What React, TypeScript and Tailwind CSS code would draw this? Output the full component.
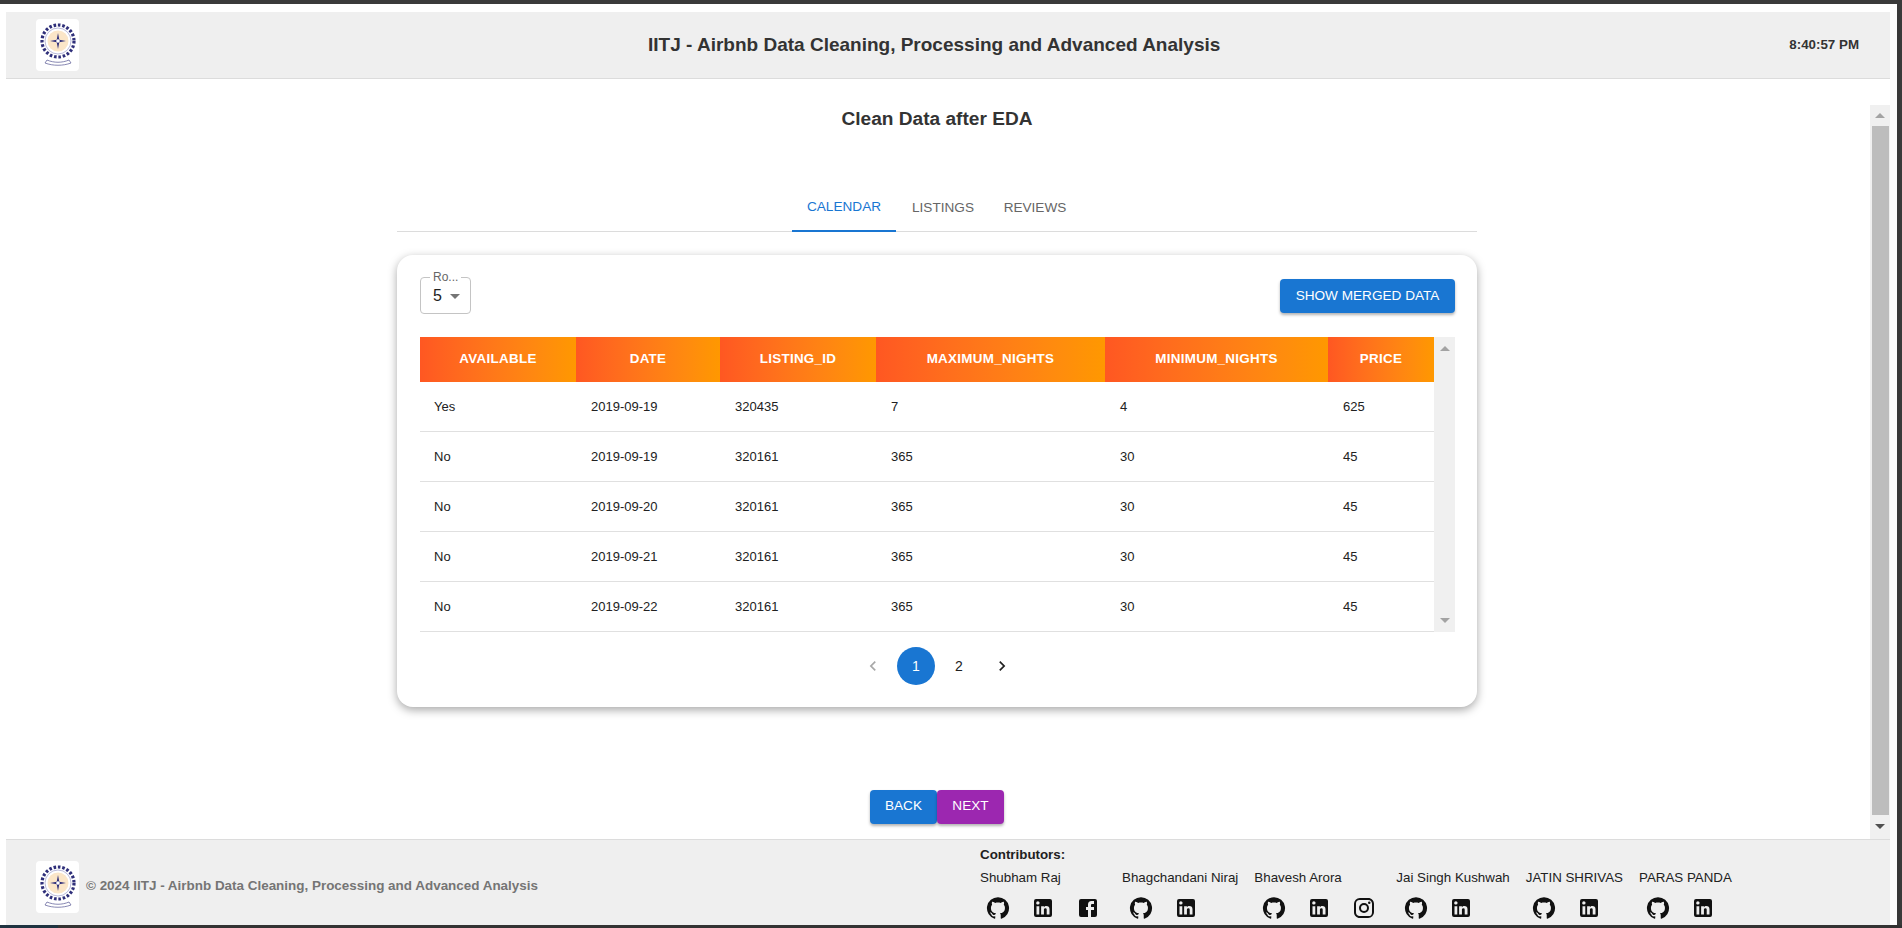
import React from 'react';

const GITHUB = 'M12 1.27a11 11 0 00-3.48 21.46c.55.09.73-.28.73-.55v-1.84c-3.03.64-3.67-1.46-3.67-1.46-.55-1.29-1.28-1.65-1.28-1.65-.92-.65.1-.65.1-.65 1.1 0 1.73 1.1 1.73 1.1.92 1.65 2.57 1.2 3.21.92a2 2 0 01.64-1.47c-2.47-.27-5.04-1.19-5.04-5.5 0-1.1.46-2.1 1.2-2.84a3.76 3.76 0 010-2.93s.91-.18 3.02 1.1c1.82-.51 3.76-.51 5.58 0 2.1-1.28 3.02-1.1 3.02-1.1a3.76 3.76 0 010 2.93 4.01 4.01 0 011.2 2.84c0 4.31-2.58 5.23-5.04 5.5.45.37.82.92.82 2.02v3.03c0 .27.1.64.73.55A11 11 0 0012 1.27';
const LINKEDIN = 'M19 3a2 2 0 0 1 2 2v14a2 2 0 0 1-2 2H5a2 2 0 0 1-2-2V5a2 2 0 0 1 2-2h14m-.5 15.5v-5.3a3.26 3.26 0 0 0-3.26-3.26c-.85 0-1.84.52-2.32 1.3v-1.11h-2.79v8.37h2.79v-4.93c0-.77.62-1.4 1.39-1.4a1.4 1.4 0 0 1 1.4 1.4v4.93h2.79M6.88 8.56a1.68 1.68 0 0 0 1.68-1.68c0-.93-.75-1.69-1.68-1.69a1.69 1.69 0 0 0-1.69 1.69c0 .93.76 1.68 1.69 1.68m1.39 9.94v-8.37H5.5v8.37h2.77z';
const FACEBOOK = 'M5 3h14a2 2 0 0 1 2 2v14a2 2 0 0 1-2 2H5a2 2 0 0 1-2-2V5a2 2 0 0 1 2-2m13 2h-2.5A3.5 3.5 0 0 0 12 8.5V11h-2v3h2v7h3v-7h3v-3h-3V9a1 1 0 0 1 1-1h2V5z';
const INSTAGRAM = 'M7.8 2h8.4C19.4 2 22 4.6 22 7.8v8.4a5.8 5.8 0 0 1-5.8 5.8H7.8C4.6 22 2 19.4 2 16.2V7.8A5.8 5.8 0 0 1 7.8 2m-.2 2A3.6 3.6 0 0 0 4 7.6v8.8C4 18.39 5.61 20 7.6 20h8.8a3.6 3.6 0 0 0 3.6-3.6V7.6C20 5.61 18.39 4 16.4 4H7.6m9.65 1.5a1.25 1.25 0 0 1 1.25 1.25A1.25 1.25 0 0 1 17.25 8 1.25 1.25 0 0 1 16 6.75a1.25 1.25 0 0 1 1.25-1.25M12 7a5 5 0 0 1 5 5 5 5 0 0 1-5 5 5 5 0 0 1-5-5 5 5 0 0 1 5-5m0 2a3 3 0 0 0-3 3 3 3 0 0 0 3 3 3 3 0 0 0 3-3 3 3 0 0 0-3-3z';

const contributors = [
  { name: 'Shubham Raj', inset: 'pl-[6px] pr-[6px]', icons: [GITHUB, LINKEDIN, FACEBOOK] },
  { name: 'Bhagchandani Niraj', inset: 'pl-[7px] pr-[5px]', icons: [GITHUB, LINKEDIN] },
  { name: 'Bhavesh Arora', inset: 'pl-2 pr-1', icons: [GITHUB, LINKEDIN, INSTAGRAM] },
  { name: 'Jai Singh Kushwah', inset: 'pl-2 pr-1', icons: [GITHUB, LINKEDIN] },
  { name: 'JATIN SHRIVAS', inset: 'pl-[6px] pr-[6px]', icons: [GITHUB, LINKEDIN] },
  { name: 'PARAS PANDA', inset: 'pl-[7px] pr-[5px]', icons: [GITHUB, LINKEDIN] },
];

const columns = [
  { label: 'AVAILABLE', width: 'w-[156px]', pad: 'pl-[14px]' },
  { label: 'DATE', width: 'w-[144px]', pad: 'pl-[15px]' },
  { label: 'LISTING_ID', width: 'w-[156px]', pad: 'pl-[15px]' },
  { label: 'MAXIMUM_NIGHTS', width: 'w-[229px]', pad: 'pl-[15px]' },
  { label: 'MINIMUM_NIGHTS', width: 'w-[223px]', pad: 'pl-[15px]' },
  { label: 'PRICE', width: 'w-[106px]', pad: 'pl-[15px]' },
];

const rows = [
  ['Yes', '2019-09-19', '320435', '7', '4', '625'],
  ['No', '2019-09-19', '320161', '365', '30', '45'],
  ['No', '2019-09-20', '320161', '365', '30', '45'],
  ['No', '2019-09-21', '320161', '365', '30', '45'],
  ['No', '2019-09-22', '320161', '365', '30', '45'],
];

const Logo: React.FC = () => (
  <div className="flex h-[52px] w-[43px] items-center justify-center rounded bg-white">
    <svg width="38" height="44" viewBox="0 0 38 44">
      <circle cx="19" cy="18" r="16" fill="none" stroke="#2f2f7a" strokeWidth="3.2" strokeDasharray="2.6 1.8" />
      <circle cx="19" cy="18" r="13" fill="none" stroke="#a8a8d0" strokeWidth="0.8" />
      <circle cx="19" cy="18" r="10.5" fill="#fbe6c8" />
      <path d="M19 10l1.3 6.7L27 18l-6.7 1.3L19 26l-1.3-6.7L11 18l6.7-1.3z" fill="#2f2f7a" />
      <circle cx="19" cy="18" r="1.8" fill="#fff" />
      <path d="M8 37c7 3 15 3 22 0l2 3c-8 3-18 3-26 0z" fill="none" stroke="#6a6aa0" strokeWidth="0.8" />
    </svg>
  </div>
);

const Icon: React.FC<{ d: string }> = ({ d }) => (
  <svg width="24" height="24" viewBox="0 0 24 24" fill="#111">
    <path d={d} />
  </svg>
);

const App: React.FC = () => {
  return (
    <div className="flex h-[928px] w-full flex-col overflow-hidden bg-white font-['Liberation_Sans',sans-serif] text-[#212121]">
      <div className="h-1 shrink-0 bg-[#3a3a3a]" />
      <div className="flex min-h-0 flex-1">
        <div className="flex min-w-0 flex-1 flex-col pl-[6px] pr-[7px] pt-2">
          <header className="flex h-[67px] shrink-0 items-center justify-between border-b border-[#dcdcdc] bg-[#efefef] pl-[30px] pr-[31px]">
            <Logo />
            <h1 className="text-[19px] font-bold text-[#333]">IITJ - Airbnb Data Cleaning, Processing and Advanced Analysis</h1>
            <span className="text-[13.33px] font-bold text-[#333]">8:40:57 PM</span>
          </header>

          <div className="flex min-h-0 flex-1">
            <main className="flex min-w-0 flex-1 flex-col items-center pr-[2px]">
              <h2 className="mt-[29px] text-[19.1px] font-bold leading-[22px] text-[#333]">Clean Data after EDA</h2>

              <nav className="mt-[52px] flex h-[50px] w-[1080px] justify-center border-b border-[#dcdcdc] pr-[2px] text-[13.6px] text-[#666]">
                <span className="flex h-[50px] w-[104px] items-center justify-center border-b-2 border-[#1976d2] pt-[2px] text-[#1976d2]">CALENDAR</span>
                <span className="flex h-[49px] w-[94px] items-center justify-center pt-[3px]">LISTINGS</span>
                <span className="flex h-[49px] w-[90px] items-center justify-center pt-[3px]">REVIEWS</span>
              </nav>

              <section className="mt-[23px] w-[1080px] rounded-[16px] bg-white pb-[22px] pl-[23px] pr-[22px] pt-[22px] shadow-[0_3px_10px_rgba(0,0,0,0.35)]">
                <div className="flex items-start justify-between">
                  <div className="relative flex h-[37px] w-[51px] items-center gap-2 rounded border border-[#c4c4c4] pl-3 text-base">
                    <span className="absolute left-[9px] top-[-8px] bg-white px-[3px] text-xs leading-[14px] text-[#666]">Ro...</span>
                    <span className="mt-px">5</span>
                    <span className="mt-px h-0 w-0 border-x-[5px] border-t-[5px] border-x-transparent border-t-[#757575]" />
                  </div>
                  <button className="mt-[2px] h-[34px] w-[175px] rounded bg-[#1976d2] text-[13.6px] text-white shadow-[0_2px_3px_rgba(0,0,0,0.3)]">SHOW MERGED DATA</button>
                </div>

                <div className="mt-[23px] flex">
                  <div className="w-[1014px]">
                    <div className="flex h-[45px]">
                      {columns.map((c) => (
                        <div key={c.label} className={`${c.width} flex items-center justify-center bg-gradient-to-r from-[#ff5722] to-[#ff9800] text-[13.4px] font-bold tracking-[0.3px] text-white`}>
                          {c.label}
                        </div>
                      ))}
                    </div>
                    {rows.map((r, i) => (
                      <div key={i} className="flex h-[50px] items-center border-b border-[#e0e0e0] text-[13px]">
                        {r.map((v, j) => (
                          <div key={j} className={`${columns[j].width} ${columns[j].pad}`}>{v}</div>
                        ))}
                      </div>
                    ))}
                  </div>
                  <div className="flex w-[21px] flex-col items-center justify-between bg-[#f0f0f0] py-[9px]">
                    <span className="h-0 w-0 border-x-[5px] border-b-[5px] border-x-transparent border-b-[#a3a3a3]" />
                    <span className="h-0 w-0 border-x-[5px] border-t-[5px] border-x-transparent border-t-[#a3a3a3]" />
                  </div>
                </div>

                <div className="mt-[15px] flex items-center justify-center text-sm">
                  <svg width="20" height="20" viewBox="0 0 24 24" fill="#a8a8a8" className="mr-[14px]"><path d="M15.41 7.41 14 6l-6 6 6 6 1.41-1.41L10.83 12z" /></svg>
                  <span className="flex h-[38px] w-[38px] items-center justify-center rounded-full bg-[#1976d2] text-white">1</span>
                  <span className="ml-[5px] mr-1 flex h-[38px] w-[38px] items-center justify-center">2</span>
                  <svg width="20" height="20" viewBox="0 0 24 24" fill="#212121" className="ml-[10px]"><path d="M10 6 8.59 7.41 13.17 12l-4.58 4.59L10 18l6-6z" /></svg>
                </div>
              </section>

              <div className="mt-[83px] flex text-[13.6px] text-white">
                <button className="h-[34px] w-[67px] rounded bg-[#1976d2] pb-[2px] shadow-[0_2px_3px_rgba(0,0,0,0.3)]">BACK</button>
                <button className="h-[34px] w-[67px] rounded bg-[#9c27b0] pb-[2px] shadow-[0_2px_3px_rgba(0,0,0,0.3)]">NEXT</button>
              </div>
            </main>

            <div className="mt-[26px] flex w-5 shrink-0 flex-col items-center bg-[#f0f0f0]">
              <span className="mt-[8px] h-0 w-0 border-x-[5px] border-b-[5px] border-x-transparent border-b-[#a3a3a3]" />
              <div className="mt-2 h-[689px] w-[17px] bg-[#bdbdbd]" />
              <span className="mt-[9px] h-0 w-0 border-x-[5px] border-t-[5px] border-x-transparent border-t-[#505050]" />
            </div>
          </div>

          <footer className="flex h-[86px] shrink-0 border-t border-[#dcdcdc] bg-[#efefef] pl-[30px]">
            <div className="flex w-[944px] items-center gap-[7px] pt-[9px]">
              <Logo />
              <span className="mb-[2px] text-[13.44px] font-bold text-[#757575]">© 2024 IITJ - Airbnb Data Cleaning, Processing and Advanced Analysis</span>
            </div>
            <div className="pt-[7px]">
              <div className="text-[13.33px] font-bold leading-4 text-[#212121]">Contributors:</div>
              <div className="mt-[7px] flex gap-4">
                {contributors.map((c) => (
                  <div key={c.name}>
                    <div className="text-[13.33px] leading-4 text-[#212121]">{c.name}</div>
                    <div className={`mt-[5px] flex gap-[21px] py-[5px] ${c.inset}`}>
                      {c.icons.map((d, i) => <Icon key={i} d={d} />)}
                    </div>
                  </div>
                ))}
              </div>
            </div>
          </footer>
        </div>
        <div className="w-[5px] shrink-0 bg-[#3a3a3a]" />
      </div>
      <div className="flex h-[3px] shrink-0">
        <div className="w-[58px] bg-[#1f3340]" />
        <div className="flex-1 bg-[#333]" />
      </div>
    </div>
  );
};

export default App;
